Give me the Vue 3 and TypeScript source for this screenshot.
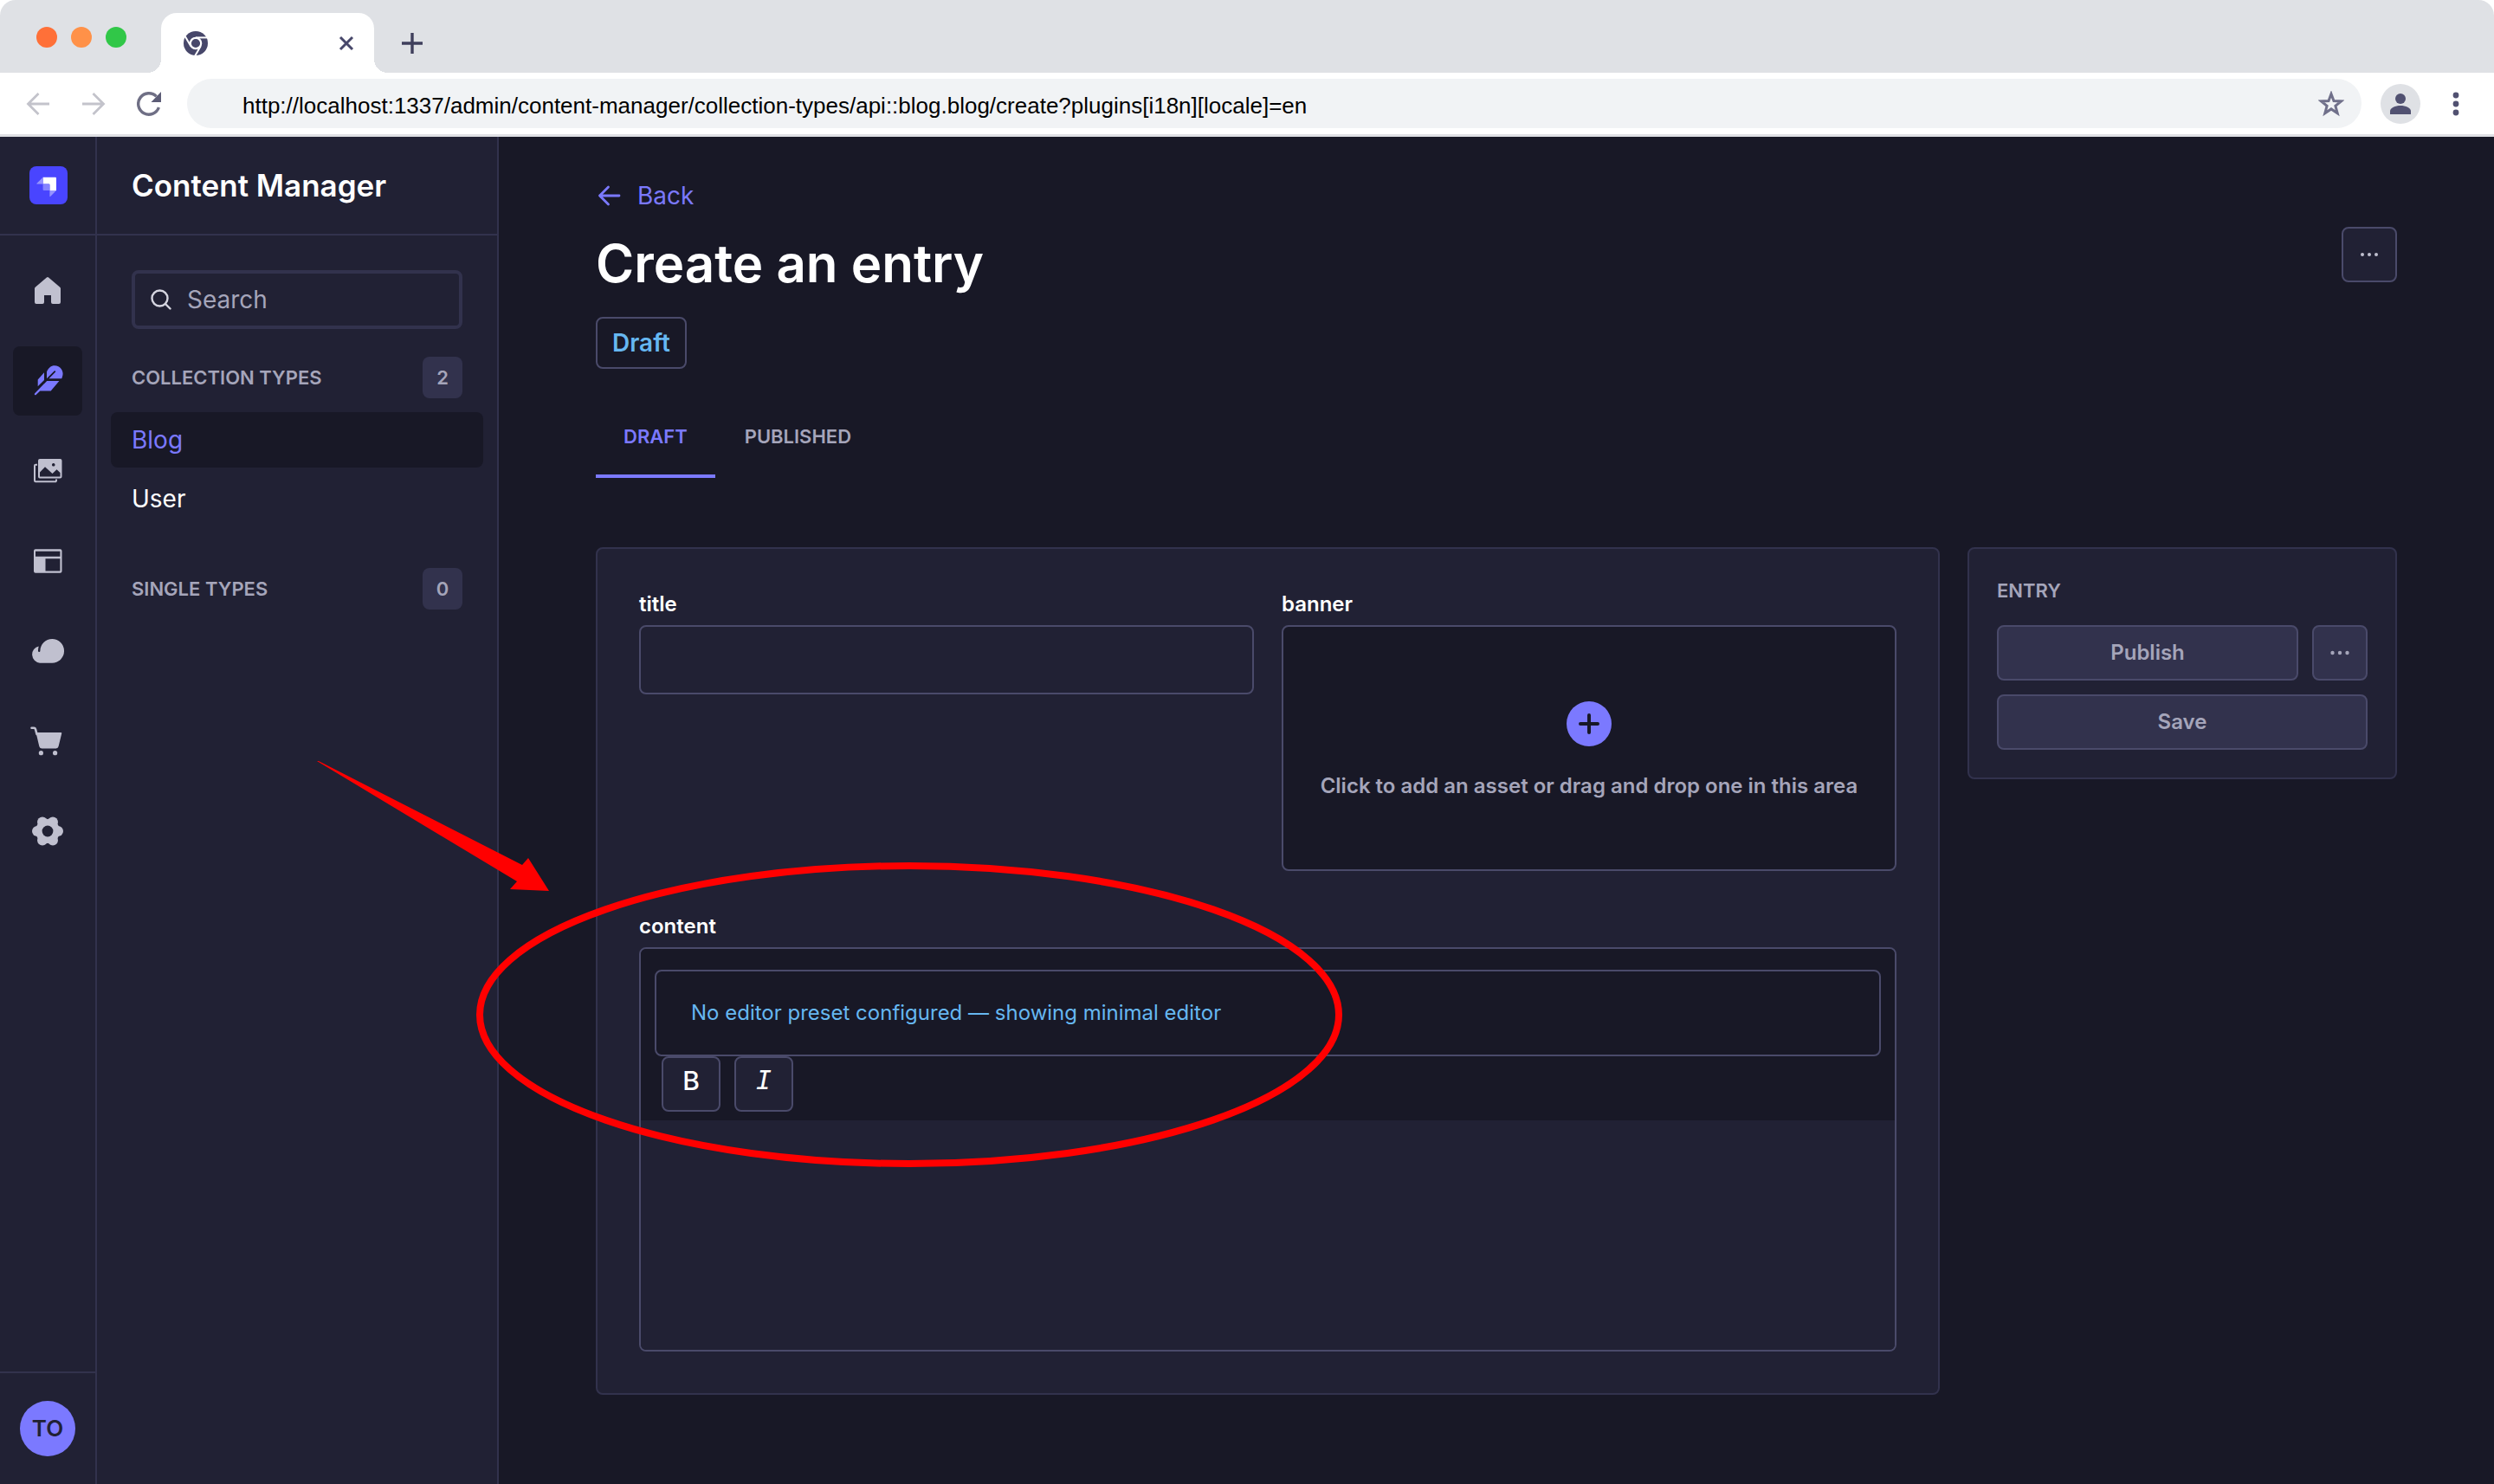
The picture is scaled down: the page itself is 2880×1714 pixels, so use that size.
<script setup lang="ts">
import { ref } from 'vue'

interface TypeLink {
  label: string
  active: boolean
}

const url = ref('http://localhost:1337/admin/content-manager/collection-types/api::blog.blog/create?plugins[i18n][locale]=en')
const search = ref('')
const title = ref('')
const content = ref('')

const collectionTypes: TypeLink[] = [
  { label: 'Blog', active: true },
  { label: 'User', active: false },
]
const singleTypes: TypeLink[] = []
const lobes = [0, 60, 120, 180, 240, 300].map((deg) => {
  const rad = (deg * Math.PI) / 180
  return { x: 20 + 12 * Math.cos(rad), y: 20 + 12 * Math.sin(rad) }
})
</script>

<template>
  <div class="window">
    <header class="browser">
      <div class="tabstrip">
        <div class="lights">
          <span class="light red"></span>
          <span class="light amber"></span>
          <span class="light green"></span>
        </div>
        <div class="tab">
          <svg width="28" height="28" viewBox="0 0 28 28" aria-hidden="true">
            <circle cx="14" cy="14" r="14" fill="#47476a" />
            <g stroke="#fff" stroke-width="2">
              <path d="M14 7.4H27" />
              <path d="M19.7 17.3L13.2 28.6" />
              <path d="M8.3 17.3L1.8 6" />
            </g>
            <circle cx="14" cy="14" r="6.2" fill="#47476a" stroke="#fff" stroke-width="2.2" />
          </svg>
          <button class="plain" aria-label="Close tab">
            <svg width="18" height="18" viewBox="0 0 18 18"><path d="M2 2L16 16M16 2L2 16" stroke="#47476a" stroke-width="3" /></svg>
          </button>
        </div>
        <button class="plain newtab" aria-label="New tab">
          <svg width="24" height="24" viewBox="0 0 24 24"><path d="M12 0V24M0 12H24" stroke="#3f3f5c" stroke-width="3.4" /></svg>
        </button>
      </div>
      <div class="toolbar">
        <div class="navbtns">
          <button class="plain" aria-label="Go back">
            <svg width="28" height="28" viewBox="0 0 28 28" fill="none" stroke="#c3c3cb" stroke-width="2.8"><path d="M27 14H3M14.5 2L2.5 14L14.5 26" /></svg>
          </button>
          <button class="plain" aria-label="Go forward">
            <svg width="28" height="28" viewBox="0 0 28 28" fill="none" stroke="#c3c3cb" stroke-width="2.8"><path d="M1 14H25M13.5 2L25.5 14L13.5 26" /></svg>
          </button>
          <button class="plain" aria-label="Reload">
            <svg width="28" height="28" viewBox="0 0 28 28" fill="none">
              <path d="M25.4 18A12.2 12.2 0 1 1 22.6 5.4" stroke="#6f6f85" stroke-width="3.4" />
              <path d="M28 0V12H16.5Z" fill="#5c5c76" />
            </svg>
          </button>
        </div>
        <div class="address">
          <input v-model="url" type="text" aria-label="Address" spellcheck="false" />
          <button class="plain" aria-label="Bookmark">
            <svg width="30" height="30" viewBox="0 0 30 30"><path d="M15 3.5L18 11.6L26.6 11.9L19.9 17.3L22.2 25.7L15 20.9L7.8 25.7L10.1 17.3L3.4 11.9L12 11.6Z" fill="none" stroke="#70708a" stroke-width="3" /></svg>
          </button>
        </div>
        <button class="plain profile" aria-label="Profile">
          <svg width="24" height="24" viewBox="0 0 24 24" fill="#515171"><circle cx="12" cy="6" r="6" /><path d="M0 24V20.5C0 16.5 6 14 12 14S24 16.5 24 20.5V24Z" /></svg>
        </button>
        <button class="plain" aria-label="Browser menu">
          <svg width="8" height="28" viewBox="0 0 8 28" fill="#515171"><circle cx="4" cy="4" r="3.4" /><circle cx="4" cy="14" r="3.4" /><circle cx="4" cy="24" r="3.4" /></svg>
        </button>
      </div>
    </header>

    <div class="app">
      <nav class="rail" aria-label="Main">
        <div class="brand">
          <svg width="44" height="44" viewBox="0 0 44 44" role="img" aria-label="Strapi">
            <rect width="44" height="44" rx="8" fill="#4945ff" />
            <path d="M15.6 12.8H30a1 1 0 0 1 1 1V28H23.4V21.4a1 1 0 0 0-1-1H15.6Z" fill="#fff" />
            <path d="M15.6 12.8V20.4H8.8a.4.4 0 0 1-.3-.7Z" fill="#9593ff" />
            <path d="M15.6 20.4H22.4a1 1 0 0 1 1 1V28H16.6a1 1 0 0 1-1-1Z" fill="#8583ff" />
            <path d="M23.4 28H31L24.1 35a.4.4 0 0 1-.7-.3Z" fill="#9593ff" />
          </svg>
        </div>
        <ul class="railnav">
          <li>
            <a href="#home" aria-label="Home">
              <svg viewBox="0 0 40 40"><path d="M18.9 4.4a1.6 1.6 0 0 1 2.2 0L34.3 15.8a2 2 0 0 1 .7 1.5V33a2 2 0 0 1-2 2h-7a2 2 0 0 1-2-2v-8h-8v8a2 2 0 0 1-2 2H7a2 2 0 0 1-2-2V17.3a2 2 0 0 1 .7-1.5Z" /></svg>
            </a>
          </li>
          <li>
            <a href="#content" class="current" aria-label="Content Manager" aria-current="page">
              <svg viewBox="0 0 40 40">
                <path d="M19 18V9.5C20.8 5 24 2.3 28 2.3a9.4 9.4 0 0 1 9 12.6c-.3 1-.5 1.7-.8 2.4H21Z" />
                <path d="M16 10.3V19L8.7 26.3V18.6Z" />
                <path d="M19 20H33.4L23.7 31.4H11.3L6.6 36a1.1 1.1 0 0 1-1.6-1.5Z" />
                <path d="M28.3 9.2L15.5 22" stroke="#181826" stroke-width="1.8" stroke-linecap="round" />
              </svg>
            </a>
          </li>
          <li>
            <a href="#media" aria-label="Media Library">
              <svg viewBox="0 0 40 40">
                <path d="M8 12.7H6.2A1.2 1.2 0 0 0 5 13.9V31.1a1.2 1.2 0 0 0 1.2 1.2H28.8A1.2 1.2 0 0 0 30 31.1V29.5" fill="none" stroke="#c0c0cf" stroke-width="2" />
                <path fill-rule="evenodd" d="M11 6H34.5a2 2 0 0 1 2 2V26.4a2 2 0 0 1-2 2H11a2 2 0 0 1-2-2V8a2 2 0 0 1 2-2ZM11 26.4H34.5V22L30.5 18.3L25.5 23L17 15.3L11 21.5ZM26.7 11a1.8 1.8 0 1 0 .1 0Z" />
              </svg>
            </a>
          </li>
          <li>
            <a href="#builder" aria-label="Content-Type Builder">
              <svg viewBox="0 0 40 40"><path fill-rule="evenodd" d="M6 6.3H34.5a2 2 0 0 1 2 2V31.7a2 2 0 0 1-2 2H6a2 2 0 0 1-2-2V8.3a2 2 0 0 1 2-2ZM6 8.7V14.8H34.4V8.7ZM17.5 17.2V31.5H34.4V17.2Z" /></svg>
            </a>
          </li>
          <li>
            <a href="#deploy" aria-label="Deploy">
              <svg viewBox="0 0 40 40"><path d="M25.2 6a13.8 13.8 0 0 1 0 27.7H11A9.8 9.8 0 0 1 9.7 14.4C9.2 16.2 9 18 9 19.7a1.2 1.2 0 0 0 2.4 0A13.8 13.8 0 0 1 25.2 6Z" /></svg>
            </a>
          </li>
          <li>
            <a href="#market" aria-label="Marketplace">
              <svg viewBox="0 0 40 40">
                <path d="M1.5 4.7H4A2 2 0 0 1 6 6.2L7.5 12" fill="none" stroke="#c0c0cf" stroke-width="2.6" stroke-linecap="round" />
                <path d="M6.5 10H35.2a1 1 0 0 1 1 1.3L32.6 26A3 3 0 0 1 29.7 28.4H13.2A3 3 0 0 1 10.3 26Z" />
                <circle cx="12.4" cy="33.7" r="2.6" /><circle cx="28.6" cy="33.7" r="2.6" />
              </svg>
            </a>
          </li>
          <li>
            <a href="#settings" aria-label="Settings">
              <svg viewBox="0 0 40 40">
                <circle v-for="(l, i) in lobes" :key="i" :cx="l.x" :cy="l.y" r="6" />
                <circle cx="20" cy="20" r="14" />
                <circle cx="20" cy="20" r="6.4" fill="#212134" />
              </svg>
            </a>
          </li>
        </ul>
        <div class="user">
          <button class="avatar">TO</button>
        </div>
      </nav>

      <aside class="subnav">
        <div class="subhead"><h2>Content Manager</h2></div>
        <div class="subbody">
          <label class="search">
            <svg width="24" height="24" viewBox="0 0 24 24" fill="none" stroke="#d5d5e0" stroke-width="2.4" stroke-linecap="round"><circle cx="10.5" cy="10.5" r="9" /><path d="M17 17L22.5 22.5" /></svg>
            <input v-model="search" type="text" placeholder="Search" aria-label="Search" />
          </label>
          <section>
            <div class="sechead"><h3>COLLECTION TYPES</h3><span class="count">{{ collectionTypes.length }}</span></div>
            <ul class="types">
              <li v-for="t in collectionTypes" :key="t.label">
                <a href="#type" :class="{ current: t.active }">{{ t.label }}</a>
              </li>
            </ul>
          </section>
          <section>
            <div class="sechead"><h3>SINGLE TYPES</h3><span class="count">{{ singleTypes.length }}</span></div>
          </section>
        </div>
      </aside>

      <main class="main">
        <a href="#back" class="back">
          <svg width="32" height="32" viewBox="0 0 32 32" fill="none" stroke="#7b79ff" stroke-width="2.8" stroke-linecap="round" stroke-linejoin="round"><path d="M27 16H4.5M14.5 6L4.5 16L14.5 26" /></svg>
          Back
        </a>
        <div class="titlerow">
          <h1>Create an entry</h1>
          <button class="btn square" aria-label="More actions">
            <svg width="20" height="6" viewBox="0 0 20 6" fill="#c0c0cf"><circle cx="2" cy="3" r="2" /><circle cx="10" cy="3" r="2" /><circle cx="18" cy="3" r="2" /></svg>
          </button>
        </div>
        <span class="status">Draft</span>
        <div class="tabs" role="tablist">
          <button role="tab" aria-selected="true" class="selected">DRAFT</button>
          <button role="tab" aria-selected="false">PUBLISHED</button>
        </div>

        <div class="grid">
          <form class="card form" @submit.prevent>
            <div class="field">
              <label for="title">title</label>
              <input id="title" v-model="title" type="text" />
            </div>
            <div class="field">
              <label for="banner">banner</label>
              <button id="banner" type="button" class="dropzone">
                <svg width="52" height="52" viewBox="0 0 52 52"><circle cx="26" cy="26" r="26" fill="#7b79ff" /><path d="M26 16V36M16 26H36" stroke="#181826" stroke-width="4" stroke-linecap="round" /></svg>
                <span>Click to add an asset or drag and drop one in this area</span>
              </button>
            </div>
            <div class="field wide">
              <label for="content">content</label>
              <div class="editor">
                <div class="editbar">
                  <p class="notice">No editor preset configured — showing minimal editor</p>
                  <div class="tools">
                    <button type="button" class="btn tool bold" aria-label="Bold">B</button>
                    <button type="button" class="btn tool italic" aria-label="Italic">I</button>
                  </div>
                </div>
                <textarea id="content" v-model="content"></textarea>
              </div>
            </div>
          </form>

          <aside class="card entry">
            <h2>ENTRY</h2>
            <div class="actions">
              <button class="btn muted grow">Publish</button>
              <button class="btn muted square" aria-label="More document actions">
                <svg width="22" height="6" viewBox="0 0 22 6" fill="#a5a5ba"><circle cx="2.5" cy="3" r="2.2" /><circle cx="11" cy="3" r="2.2" /><circle cx="19.5" cy="3" r="2.2" /></svg>
              </button>
            </div>
            <button class="btn muted">Save</button>
          </aside>
        </div>
      </main>
    </div>

    <svg class="annotation" width="1200" height="490" viewBox="360 870 1200 490" aria-hidden="true">
      <path d="M366 879L368 879L603 999L610 991L634 1029L589 1027L597 1018Z" fill="#f00" />
      <ellipse cx="1050" cy="1172" rx="496" ry="172" fill="none" stroke="#f00" stroke-width="8" />
    </svg>
  </div>
</template>

<style>
body {
  margin: 0;
  background: #fff;
}
</style>

<style scoped>
* {
  box-sizing: border-box;
}
.window {
  position: relative;
  display: flex;
  flex-direction: column;
  min-height: 100vh;
  font-family: Inter, "Liberation Sans", sans-serif;
  font-size: 28px;
  line-height: 40px;
  color: #fff;
}
h1, h2, h3, p, ul {
  margin: 0;
  padding: 0;
  font-weight: 600;
}
ul {
  list-style: none;
}
a {
  text-decoration: none;
  color: inherit;
}
svg {
  display: block;
  flex: none;
}
button, input, textarea {
  font: inherit;
  color: inherit;
  margin: 0;
  outline: none;
}
.plain {
  display: flex;
  border: 0;
  padding: 0;
  background: none;
}

/* browser chrome */
.browser {
  border-bottom: 3px solid #dfe0e4;
  background: #fff;
  border-radius: 18px 18px 0 0;
}
.tabstrip {
  display: flex;
  align-items: flex-end;
  height: 84px;
  padding-left: 42px;
  background: #dfe1e5;
  border-radius: 18px 18px 0 0;
}
.lights {
  display: flex;
  gap: 16px;
  width: 144px;
  height: 84px;
  padding-top: 31px;
}
.light {
  width: 24px;
  height: 24px;
  border-radius: 50%;
}
.red { background: #ff7038; }
.amber { background: #ff9148; }
.green { background: #31c748; }
.tab {
  position: relative;
  display: flex;
  align-items: center;
  justify-content: space-between;
  width: 246px;
  height: 69px;
  padding: 0 23px 0 26px;
  background: #fff;
  border-radius: 18px 18px 0 0;
}
.tab::before, .tab::after {
  content: "";
  position: absolute;
  bottom: 0;
  width: 16px;
  height: 16px;
}
.tab::before {
  left: -16px;
  background: radial-gradient(circle at 0 0, transparent 16px, #fff 16px);
}
.tab::after {
  right: -16px;
  background: radial-gradient(circle at 100% 0, transparent 16px, #fff 16px);
}
.newtab {
  padding: 0 0 22px 32px;
}
.toolbar {
  display: flex;
  align-items: center;
  height: 71px;
  padding: 0 40px 0 30px;
}
.navbtns {
  display: flex;
  gap: 36px;
  width: 186px;
}
.address {
  flex: 1;
  display: flex;
  align-items: center;
  height: 57px;
  margin-right: 22px;
  padding: 0 20px 0 64px;
  background: #f1f3f5;
  border-radius: 29px;
}
.address input {
  flex: 1;
  min-width: 0;
  height: 46px;
  padding: 6px 0 0;
  border: 0;
  background: none;
  color: #000;
  font-family: "Liberation Sans", Arial, sans-serif;
  font-size: 26px;
}
.profile {
  align-items: center;
  justify-content: center;
  width: 46px;
  height: 46px;
  margin-right: 37px;
  background: #dfe1e5;
  border-radius: 50%;
}

/* admin shell */
.app {
  flex: 1;
  display: flex;
  background: #181826;
}
.rail {
  display: flex;
  flex-direction: column;
  width: 112px;
  flex: none;
  background: #212134;
  border-right: 2px solid #32324d;
}
.brand, .subhead {
  display: flex;
  align-items: center;
  height: 114px;
  border-bottom: 2px solid #32324d;
}
.brand {
  padding-left: 34px;
}
.railnav {
  flex: 1;
  display: flex;
  flex-direction: column;
  align-items: center;
  gap: 24px;
  padding-top: 24px;
}
.railnav a {
  display: flex;
  align-items: center;
  justify-content: center;
  width: 80px;
  height: 80px;
  border-radius: 8px;
  fill: #c0c0cf;
}
.railnav a.current {
  background: #181826;
  fill: #7b79ff;
}
.railnav svg {
  width: 40px;
  height: 40px;
}
.user {
  display: flex;
  justify-content: center;
  padding: 32px 0;
  border-top: 2px solid #32324d;
}
.avatar {
  width: 64px;
  height: 64px;
  padding: 0;
  border: 0;
  border-radius: 50%;
  background: #7b79ff;
  color: #212134;
  font-weight: 600;
  font-size: 26px;
}
.subnav {
  width: 464px;
  flex: none;
  background: #212134;
  border-right: 2px solid #32324d;
}
.subhead {
  padding-left: 40px;
}
.subhead h2 {
  font-size: 35px;
}
.subbody {
  display: flex;
  flex-direction: column;
  padding: 40px 16px;
}
.search {
  display: flex;
  align-items: center;
  gap: 18px;
  height: 68px;
  margin: 0 24px 32px;
  padding: 0 18px;
  border: 4px solid #32324d;
  border-radius: 8px;
}
.search input {
  flex: 1;
  min-width: 0;
  padding: 0;
  border: 0;
  background: none;
}
.search input::placeholder {
  color: #a5a5ba;
  opacity: 1;
}
.subbody section + section {
  margin-top: 48px;
}
.sechead {
  display: flex;
  align-items: center;
  justify-content: space-between;
  margin: 0 24px 16px;
  color: #a5a5ba;
}
.sechead h3, .count, .entry h2, .tabs button {
  font-size: 22px;
  font-weight: 600;
}
.count {
  width: 46px;
  line-height: 48px;
  text-align: center;
  background: #32324d;
  border-radius: 8px;
}
.types {
  display: flex;
  flex-direction: column;
  gap: 4px;
}
.types a {
  display: block;
  padding: 12px 24px;
  border-radius: 8px;
  font-weight: 400;
}
.types a.current {
  background: #181826;
  color: #7b79ff;
}

/* entry page */
.main {
  flex: 1;
  min-width: 0;
  display: flex;
  flex-direction: column;
  align-items: flex-start;
  padding: 48px 112px;
}
.back {
  display: flex;
  align-items: center;
  gap: 16px;
  color: #7b79ff;
}
.titlerow {
  display: flex;
  justify-content: space-between;
  align-items: flex-start;
  width: 100%;
  margin: 16px 0 20px;
}
h1 {
  font-size: 60px;
  line-height: 84px;
}
.btn {
  display: flex;
  align-items: center;
  justify-content: center;
  height: 64px;
  padding: 0;
  border: 2px solid #4a4a6a;
  border-radius: 8px;
  background: #212134;
  font-size: 24px;
  font-weight: 600;
}
.square {
  width: 64px;
  flex: none;
}
.status {
  padding: 8px 17px;
  border: 2px solid #4a4a6a;
  border-radius: 8px;
  color: #66b7f1;
  font-weight: 600;
}
.tabs {
  display: flex;
  gap: 2px;
  margin: 32px 0 80px;
}
.tabs button {
  height: 94px;
  padding: 2px 32px 0;
  border: 0;
  border-bottom: 4px solid transparent;
  background: none;
  color: #a5a5ba;
}
.tabs button.selected {
  color: #7b79ff;
  border-color: #7b79ff;
}
.grid {
  display: grid;
  grid-template-columns: repeat(12, minmax(0, 1fr));
  gap: 32px;
  align-items: start;
  width: 100%;
}
.card {
  background: #212134;
  border: 2px solid #32324d;
  border-radius: 8px;
}
.form {
  grid-column: span 9;
  display: grid;
  grid-template-columns: repeat(2, minmax(0, 1fr));
  gap: 48px 32px;
  padding: 48px;
}
.field {
  display: flex;
  flex-direction: column;
  gap: 8px;
  font-size: 24px;
}
.field label {
  line-height: 32px;
  font-weight: 600;
}
.field input {
  height: 80px;
  padding: 0 24px;
  border: 2px solid #4a4a6a;
  border-radius: 8px;
  background: #212134;
}
.wide {
  grid-column: span 2;
}
.dropzone {
  display: flex;
  flex-direction: column;
  align-items: center;
  justify-content: center;
  gap: 26px;
  height: 284px;
  padding: 10px 0 0;
  border: 2px solid #4a4a6a;
  border-radius: 8px;
  background: #181826;
  color: #a5a5ba;
  font-weight: 600;
}
.editor {
  border: 2px solid #4a4a6a;
  border-radius: 8px;
  overflow: hidden;
}
.editbar {
  padding: 24px 16px 10px;
  background: #181826;
}
.notice {
  padding: 28px 40px;
  border: 2px solid #4a4a6a;
  border-radius: 8px;
  color: #66b7f1;
  font-weight: 400;
}
.tools {
  display: flex;
  gap: 16px;
  padding: 0 8px;
}
.tool {
  width: 68px;
  padding-bottom: 8px;
  font-size: 30px;
}
.bold {
  font-weight: 500;
}
.italic {
  font-family: "DejaVu Sans Mono", monospace;
  font-style: italic;
  font-weight: 400;
}
.editor textarea {
  display: block;
  width: 100%;
  height: 265px;
  padding: 16px 24px;
  border: 0;
  resize: none;
  background: #212134;
}
.entry {
  grid-column: span 3;
  display: flex;
  flex-direction: column;
  gap: 16px;
  padding: 32px;
  color: #a5a5ba;
}
.entry h2 {
  margin-bottom: 8px;
  line-height: 32px;
}
.actions {
  display: flex;
  gap: 16px;
}
.grow {
  flex: 1;
}
.muted {
  background: #32324d;
}

/* hand-drawn callout over the page */
.annotation {
  position: absolute;
  left: 360px;
  top: 870px;
  pointer-events: none;
}
</style>
